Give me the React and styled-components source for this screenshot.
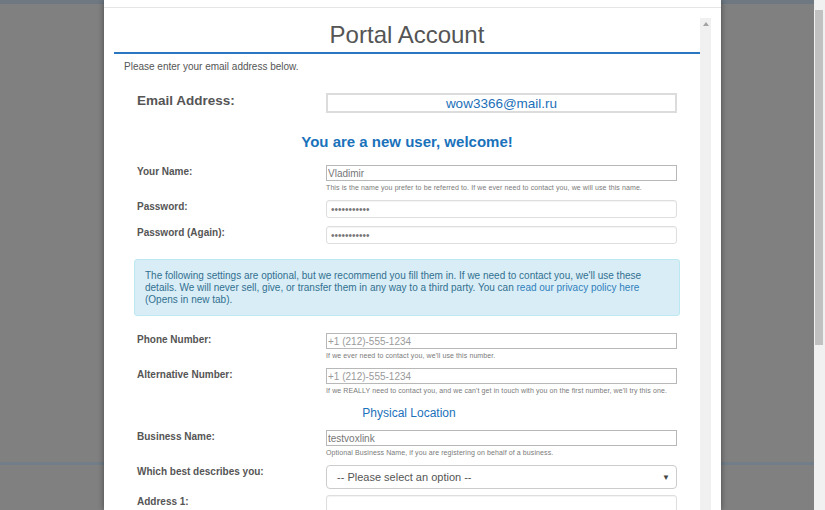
import React from 'react';
import styled, { createGlobalStyle } from 'styled-components';

const GlobalStyle = createGlobalStyle`
  html, body { margin: 0; padding: 0; overflow: hidden; }
  body { font-family: "Liberation Sans", Arial, sans-serif; color: #555; }
  * { box-sizing: border-box; }
`;

const Viewport = styled.div`
  display: flex;
  width: 825px;
  height: 510px;
`;

const Stage = styled.div`
  position: relative;
  flex: 1;
  display: flex;
  flex-direction: column;
  background: #808080;
  overflow: hidden;
`;

const PageHeader = styled.div`
  height: 4px;
  background: #6d7883;
`;

const PageRule = styled.div`
  height: 3px;
  margin-top: 458px;
  background: #717d88;
`;

const PageScrollbar = styled.div`
  width: 11px;
  background: #f1f1f1;
  padding: 10px 2px 0 1px;
`;

const PageThumb = styled.div`
  height: 335px;
  background: #c1c1c1;
`;

const Modal = styled.div`
  position: absolute;
  top: 0;
  left: 104px;
  width: 617px;
  height: 510px;
  display: flex;
  flex-direction: column;
  background: #fff;
  box-shadow: 0 0 6px rgba(0, 0, 0, 0.45);
`;

const ModalHead = styled.div`
  flex-shrink: 0;
  height: 8px;
  border-bottom: 1px solid #e5e5e5;
`;

const ModalBody = styled.div`
  flex: 1;
  min-height: 0;
  display: flex;
  padding: 10px 10px 0;
`;

const Content = styled.div`
  flex: 1;
  overflow: hidden;
`;

const ScrollTrack = styled.div`
  width: 11px;
  display: flex;
  justify-content: center;
  padding-top: 4px;
  background: #f0f0f0;
`;

const ScrollArrow = styled.div`
  width: 0;
  height: 0;
  border-left: 3px solid transparent;
  border-right: 3px solid transparent;
  border-bottom: 4px solid #a3a3a3;
`;

const Title = styled.h1`
  margin: 0;
  padding: 3px 0 3px;
  border-bottom: 2px solid #2a76c0;
  text-align: center;
  font-size: 24px;
  line-height: 28px;
  font-weight: normal;
  color: #555;
`;

const Intro = styled.p`
  margin: 6px 0 0 10px;
  font-size: 10px;
  line-height: 14px;
`;

const Row = styled.div`
  display: grid;
  grid-template-columns: 189px 351px;
  align-items: start;
  padding-left: 23px;
  margin-top: ${(p) => p.$gap}px;
`;

const Label = styled.div`
  padding-top: ${(p) => (p.$big ? 0 : 1)}px;
  font-weight: bold;
  font-size: ${(p) => (p.$big ? 13.5 : 10)}px;
  line-height: ${(p) => (p.$big ? 16 : 12)}px;
  color: #555;
`;

const Field = styled.div`
  display: flex;
  flex-direction: column;
`;

const TextInput = styled.input`
  width: 100%;
  height: ${(p) => (p.$variant === 'email' ? 20 : p.$variant === 'soft' ? 18 : 16)}px;
  margin: 0;
  padding: 0 ${(p) => (p.$variant === 'soft' ? 4 : 1)}px;
  border: ${(p) =>
    p.$variant === 'email'
      ? '2px solid #dcdcdc'
      : p.$variant === 'soft'
      ? '1px solid #dedede'
      : '1px solid #b8b8b8'};
  border-radius: ${(p) => (p.$variant === 'soft' ? 3 : 0)}px;
  box-shadow: ${(p) => (p.$variant === 'soft' ? 'inset 0 1px 1px rgba(0,0,0,0.05)' : 'none')};
  background: #fff;
  outline: none;
  font-family: "Liberation Sans", Arial, sans-serif;
  font-size: ${(p) => (p.$variant === 'email' ? 13.5 : 10)}px;
  text-align: ${(p) => (p.$variant === 'email' ? 'center' : 'left')};
  color: ${(p) => (p.$variant === 'email' ? '#1c70b9' : '#777')};
  &::placeholder { color: #9a9a9a; }
`;

const Help = styled.div`
  margin-top: 2px;
  font-size: 7px;
  line-height: 9px;
  letter-spacing: 0.1px;
  color: #7a7a7a;
  white-space: nowrap;
`;

const Welcome = styled.h2`
  margin: 19px 0 0;
  text-align: center;
  font-size: 15px;
  line-height: 20px;
  font-weight: bold;
  color: #1a72bb;
`;

const Notice = styled.div`
  margin: 15px 20px 0;
  padding: 10px 10px 9px;
  border: 1px solid #bce8f1;
  border-radius: 3px;
  background: #d9edf7;
  color: #31708f;
  font-size: 10px;
  line-height: 12px;
`;

const NoticeLink = styled.a`
  color: #2f7fba;
  text-decoration: none;
`;

const Section = styled.h3`
  margin: 10px 0 0;
  padding-left: 4px;
  text-align: center;
  font-size: 12px;
  line-height: 16px;
  font-weight: normal;
  color: #1b72bb;
`;

const SelectBox = styled.div`
  height: 24px;
  display: flex;
  align-items: center;
  justify-content: space-between;
  padding: 0 6px 0 10px;
  border: 1px solid #ccc;
  border-radius: 4px;
  font-size: 11px;
  color: #555;
`;

const SelectArrow = styled.span`
  font-size: 8px;
  color: #444;
`;

const fields = {
  phoneHelp: "If we ever need to contact you, we'll use this number.",
  altHelp:
    "If we REALLY need to contact you, and we can't get in touch with you on the first number, we'll try this one.",
};

export default function App() {
  return (
    <>
      <GlobalStyle />
      <Viewport>
        <Stage>
          <PageHeader />
          <PageRule />
          <Modal>
            <ModalHead />
            <ModalBody>
              <Content>
                <Title>Portal Account</Title>
                <Intro>Please enter your email address below.</Intro>

                <Row $gap={19}>
                  <Label $big>Email Address:</Label>
                  <TextInput $variant="email" readOnly value="wow3366@mail.ru" />
                </Row>

                <Welcome>You are a new user, welcome!</Welcome>

                <Row $gap={13}>
                  <Label>Your Name:</Label>
                  <Field>
                    <TextInput readOnly value="Vladimir" />
                    <Help>
                      This is the name you prefer to be referred to. If we ever need to contact you, we will use this name.
                    </Help>
                  </Field>
                </Row>
                <Row $gap={8}>
                  <Label>Password:</Label>
                  <TextInput $variant="soft" type="password" readOnly value="12345678901" />
                </Row>
                <Row $gap={8}>
                  <Label>Password (Again):</Label>
                  <TextInput $variant="soft" type="password" readOnly value="12345678901" />
                </Row>

                <Notice>
                  The following settings are optional, but we recommend you fill them in. If we need to contact you,
                  we'll use these details. We will never sell, give, or transfer them in any way to a third party. You
                  can <NoticeLink href="#">read our privacy policy here</NoticeLink> (Opens in new tab).
                </Notice>

                <Row $gap={17}>
                  <Label>Phone Number:</Label>
                  <Field>
                    <TextInput readOnly placeholder="+1 (212)-555-1234" />
                    <Help>{fields.phoneHelp}</Help>
                  </Field>
                </Row>
                <Row $gap={8}>
                  <Label>Alternative Number:</Label>
                  <Field>
                    <TextInput readOnly placeholder="+1 (212)-555-1234" />
                    <Help>{fields.altHelp}</Help>
                  </Field>
                </Row>

                <Section>Physical Location</Section>

                <Row $gap={9}>
                  <Label>Business Name:</Label>
                  <Field>
                    <TextInput readOnly value="testvoxlink" />
                    <Help>Optional Business Name, if you are registering on behalf of a business.</Help>
                  </Field>
                </Row>
                <Row $gap={8}>
                  <Label>Which best describes you:</Label>
                  <SelectBox>
                    <span>-- Please select an option --</span>
                    <SelectArrow>▼</SelectArrow>
                  </SelectBox>
                </Row>
                <Row $gap={6}>
                  <Label>Address 1:</Label>
                  <TextInput $variant="soft" readOnly value="" />
                </Row>
              </Content>
              <ScrollTrack>
                <ScrollArrow />
              </ScrollTrack>
            </ModalBody>
          </Modal>
        </Stage>
        <PageScrollbar>
          <PageThumb />
        </PageScrollbar>
      </Viewport>
    </>
  );
}
